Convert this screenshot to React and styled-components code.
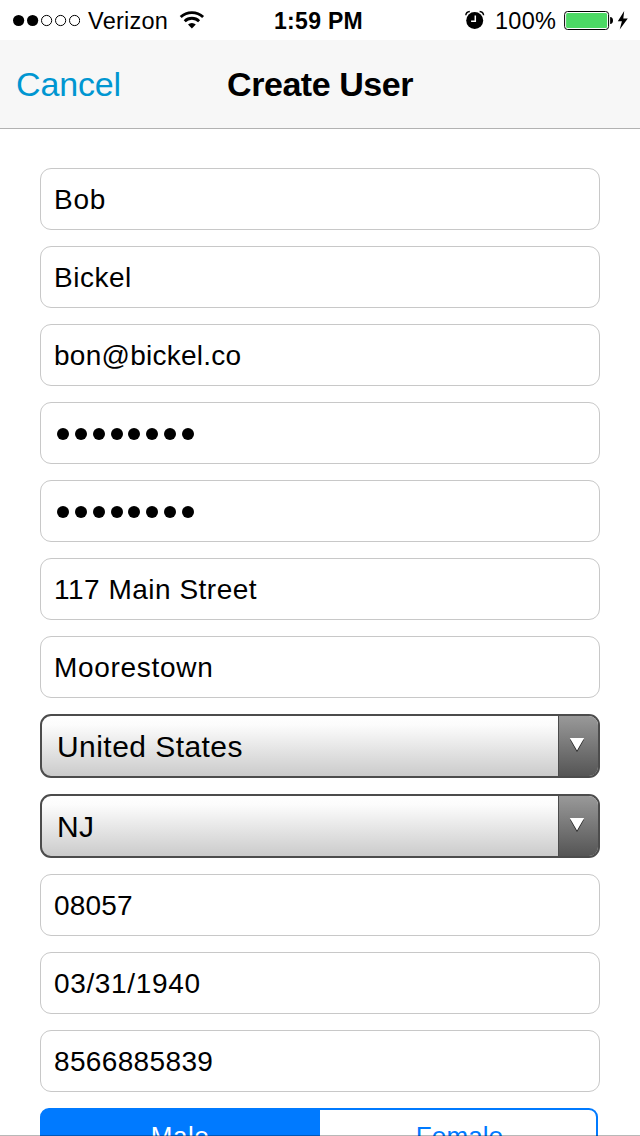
import React from 'react';
import styled, { createGlobalStyle } from 'styled-components';

const GlobalStyle = createGlobalStyle`
  *, *::before, *::after { box-sizing: border-box; }
  body {
    margin: 0;
    background: #fff;
    color: #000;
    font-family: "Liberation Sans", Arial, sans-serif;
    overflow: hidden;
  }
`;

const Screen = styled.div`
  position: relative;
  display: flex;
  flex-direction: column;
  width: 640px;
  height: 1136px;
  overflow: hidden;
  background: #fff;
`;

const StatusBar = styled.header`
  display: grid;
  grid-template-columns: 1fr auto 1fr;
  align-items: center;
  height: 40px;
  flex: none;
  padding: 0 11px 0 12px;
  svg { display: block; flex: none; margin-bottom: 2px; }
`;

const StatusGroup = styled.div`
  display: flex;
  align-items: center;
  justify-content: ${(p) => (p.$end ? 'flex-end' : 'flex-start')};
`;

const Carrier = styled.span`
  font-size: 23.5px;
  line-height: 42px;
  letter-spacing: 0.25px;
  margin: 0 11px 0 8px;
`;

const Clock = styled.span`
  font-size: 23px;
  font-weight: 700;
  line-height: 42px;
  letter-spacing: 0.3px;
  padding-right: 4px;
`;

const Percent = styled.span`
  font-size: 23.5px;
  line-height: 42px;
  letter-spacing: 0.2px;
  margin: 0 8px 0 10px;
`;

const NavBar = styled.nav`
  display: grid;
  grid-template-columns: 1fr auto 1fr;
  align-items: center;
  height: 89px;
  flex: none;
  padding: 0 16px;
  background: #f7f7f7;
  border-bottom: 1px solid #b2b2b2;
`;

const CancelButton = styled.button`
  justify-self: start;
  padding: 0;
  border: 0;
  background: none;
  color: #0096d1;
  font: 34px/88px "Liberation Sans", Arial, sans-serif;
  letter-spacing: -0.15px;
`;

const Title = styled.h1`
  margin: 0;
  font-size: 34px;
  font-weight: 700;
  line-height: 88px;
  letter-spacing: -0.45px;
`;

const Form = styled.main`
  display: flex;
  flex-direction: column;
  gap: 16px;
  padding: 39px 40px 0;
`;

const Field = styled.div`
  display: flex;
  align-items: center;
  height: 62px;
  flex: none;
  padding: 2px 13px 0;
  border: 1px solid #c8c8c8;
  border-radius: 11px;
  background: #fff;
  font-size: 28px;
  line-height: 58px;
  letter-spacing: ${(p) => p.$spacing || 0}px;
`;

const Mask = styled.div`
  display: flex;
  gap: 5.85px;
  padding-left: 3px;
`;

const MaskDot = styled.i`
  width: 12px;
  height: 12px;
  border-radius: 50%;
  background: #000;
`;

const Select = styled.div`
  display: flex;
  height: 64px;
  flex: none;
  border: 2px solid #4c4c4c;
  border-radius: 11px;
  overflow: hidden;
  background: linear-gradient(#fff, #fcfcfc 15%, #cbcbcb);
`;

const SelectValue = styled.div`
  flex: 1;
  padding-left: 15px;
  font-size: 30px;
  line-height: 61px;
  letter-spacing: ${(p) => p.$spacing || 0}px;
`;

const SelectArrow = styled.div`
  width: 40px;
  border-left: 1px solid #4c4c4c;
  background: linear-gradient(#999, #555);
  display: flex;
  justify-content: center;
  padding: 21px 3px 0 0;
`;

const Segmented = styled.div`
  display: flex;
  width: 558px;
  height: 58px;
  flex: none;
`;

const Segment = styled.div`
  flex: 1;
  border: 2px solid #007aff;
  border-radius: ${(p) => (p.$active ? '9px 0 0 9px' : '0 9px 9px 0')};
  border-left-width: ${(p) => (p.$active ? '2px' : '0')};
  text-align: center;
  font-size: 26px;
  line-height: 53px;
  letter-spacing: ${(p) => (p.$active ? 0.5 : 0.1)}px;
  color: ${(p) => (p.$active ? '#fff' : '#007aff')};
  background: ${(p) => (p.$active ? '#007aff' : '#fff')};
  ${(p) => (p.$active ? 'flex: 0 0 280px;' : 'padding-left: 3px;')}
`;

const BottomLine = styled.div`
  position: absolute;
  left: 0;
  right: 0;
  bottom: 0;
  height: 1px;
  background: rgba(0, 0, 0, 0.28);
`;

const Signal = () => (
  <svg width="68" height="14" viewBox="0 0 68 14">
    {[0, 1, 2, 3, 4].map((i) =>
      i < 2 ? (
        <circle key={i} cx={6.6 + i * 14} cy="7.5" r="5.6" />
      ) : (
        <circle key={i} cx={6.6 + i * 14} cy="7.5" r="5.1" fill="none" stroke="#000" strokeWidth="1" />
      )
    )}
  </svg>
);

const Wifi = () => (
  <svg width="26" height="20" viewBox="0 0 26 20">
    <g fill="none" stroke="#000" strokeWidth="2.8">
      <path d="M1.7 7.1 A16 16 0 0 1 24.1 7.1" />
      <path d="M5.7 11.2 A10.3 10.3 0 0 1 20.1 11.2" />
    </g>
    <path d="M9 14.5 A5.5 5.5 0 0 1 16.8 14.5 L12.9 18.5 Z" />
  </svg>
);

const Alarm = () => (
  <svg width="20" height="20" viewBox="0 0 20 20">
    <circle cx="9.7" cy="10.6" r="8.5" />
    <path d="M.8 5.3 Q1 1.9 4.8 1.5 M14.6 1.5 Q18.4 1.9 18.6 5.3" fill="none" stroke="#000" strokeWidth="1.4" />
    <path d="M10.3 5.5 V11.3 H6.1" fill="none" stroke="#fff" strokeWidth="1.5" />
  </svg>
);

const Battery = () => (
  <svg width="50" height="20" viewBox="0 0 50 20">
    <rect x=".6" y="1.5" width="44" height="18" rx="3" fill="#fff" stroke="#000" />
    <rect x="2.1" y="3" width="41" height="15" rx="1.5" fill="#4cd964" />
    <path d="M46.1 7 Q49 7.4 49 10.5 Q49 13.6 46.1 14 Z" />
  </svg>
);

const Bolt = () => (
  <svg width="15" height="20" viewBox="0 0 15 20">
    <path d="M10.2 1 L3.8 11.3 H7.9 L5.7 19.4 L13.8 8.5 H9.3 Z" />
  </svg>
);

const Triangle = () => (
  <svg width="16" height="16" viewBox="0 0 16 16">
    <path d="M1 2.4 L8 15 L15 2.4 Z" fill="#181818" />
    <path d="M.8 1 L8 13.4 L15.2 1 Z" fill="#fff" />
  </svg>
);

const Password = () => (
  <Field>
    <Mask>
      {Array.from({ length: 8 }, (_, i) => (
        <MaskDot key={i} />
      ))}
    </Mask>
  </Field>
);

const Dropdown = ({ value, spacing }) => (
  <Select>
    <SelectValue $spacing={spacing}>{value}</SelectValue>
    <SelectArrow>
      <Triangle />
    </SelectArrow>
  </Select>
);

export default function App() {
  return (
    <>
      <GlobalStyle />
      <Screen>
        <StatusBar>
          <StatusGroup>
            <Signal />
            <Carrier>Verizon</Carrier>
            <Wifi />
          </StatusGroup>
          <Clock>1:59 PM</Clock>
          <StatusGroup $end>
            <Alarm />
            <Percent>100%</Percent>
            <Battery />
            <Bolt />
          </StatusGroup>
        </StatusBar>
        <NavBar>
          <CancelButton>Cancel</CancelButton>
          <Title>Create User</Title>
        </NavBar>
        <Form>
          <Field $spacing={0.8}>Bob</Field>
          <Field $spacing={0.5}>Bickel</Field>
          <Field $spacing={0.25}>bon@bickel.co</Field>
          <Password />
          <Password />
          <Field $spacing={0.5}>117 Main Street</Field>
          <Field $spacing={0.7}>Moorestown</Field>
          <Dropdown value="United States" spacing={0.45} />
          <Dropdown value="NJ" spacing={0.4} />
          <Field $spacing={0.2}>08057</Field>
          <Field $spacing={0.65}>03/31/1940</Field>
          <Field $spacing={0.35}>8566885839</Field>
          <Segmented>
            <Segment $active>Male</Segment>
            <Segment>Female</Segment>
          </Segmented>
        </Form>
        <BottomLine />
      </Screen>
    </>
  );
}
